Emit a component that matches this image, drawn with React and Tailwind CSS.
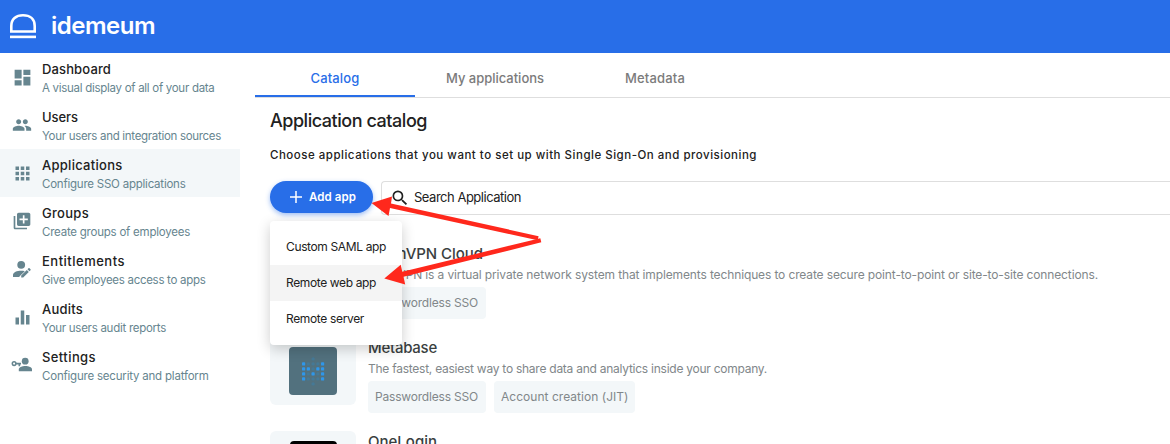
import React from "react";
import { MdDashboard, MdPeople, MdApps, MdLibraryAdd, MdEqualizer, MdSearch } from "react-icons/md";

function UserEditIcon() {
  return (
    <svg width="20" height="18" viewBox="0 0 20 18" fill="currentColor">
      <circle cx="9.2" cy="4.8" r="3.9" />
      <path d="M1 17v-2c0-2.7 4-4.2 8.2-4.2 1.5 0 2.5.1 3.6.4L7.4 16.6V17z" />
      <path d="M9.2 17.6v-2l5.6-5.600 2 2-5.600 5.600zM15.500 9.300l1-1c.3-.3.7-.3 1 0l1 1c.3.3.3.7 0 1l-1 1z" />
    </svg>
  );
}

function UserKeyIcon() {
  return (
    <svg width="22" height="18" viewBox="0 0 22 18" fill="currentColor">
      <circle cx="14.2" cy="5.2" r="3.4" />
      <path d="M7.8 15.2v-1.700c0-2.200 3.400-3.400 6.600-3.400s6.600 1.200 6.600 3.400v1.700z" />
      <circle cx="3.1" cy="7.6" r="1.8" fill="none" stroke="currentColor" strokeWidth="1.5" />
      <path d="M4.800 6.800h5.200v1.600h-.8v1.900H7.500V8.400H4.800z" />
    </svg>
  );
}

const nav = [
  { title: "Dashboard", sub: "A visual display of all of your data", icon: <MdDashboard size={21} />, tt: "tracking-[0.0103em]", st: "tracking-[-0.0248em]" },
  { title: "Users", sub: "Your users and integration sources", icon: <MdPeople size={20} />, tt: "tracking-[-0.0045em]", st: "tracking-[-0.0266em]" },
  { title: "Applications", sub: "Configure SSO applications", icon: <MdApps size={21} />, tt: "tracking-[0.021em]", st: "tracking-[-0.0197em]", active: true },
  { title: "Groups", sub: "Create groups of employees", icon: <MdLibraryAdd size={20} />, tt: "tracking-[0.023em]", st: "tracking-[-0.0201em]" },
  { title: "Entitlements", sub: "Give employees access to apps", icon: <UserEditIcon />, tt: "tracking-[0.0383em]", st: "tracking-[-0.025em]" },
  { title: "Audits", sub: "Your users audit reports", icon: <MdEqualizer size={21} />, tt: "tracking-[0.0172em]", st: "tracking-[-0.0235em]" },
  { title: "Settings", sub: "Configure security and platform", icon: <UserKeyIcon />, tt: "tracking-[0.032em]", st: "tracking-[-0.0179em]" },
];

const tabs = [
  { label: "Catalog", t: "tracking-[0.0113em]", active: true },
  { label: "My applications", t: "tracking-[-0.0015em]" },
  { label: "Metadata", t: "tracking-[0.0129em]" },
];

const menu = [
  { label: "Custom SAML app", t: "tracking-[-0.0305em]" },
  { label: "Remote web app", t: "tracking-[-0.0309em]", active: true },
  { label: "Remote server", t: "tracking-[-0.0288em]" },
];

const sso = { label: "Passwordless SSO", t: "w-[118px] tracking-[-0.0159em]" };
const jit = { label: "Account creation (JIT)", t: "w-[141px] tracking-[0.0028em]" };

// Dots of the Metabase logo: 1 is bright, 0 is dim, a space is empty.
const dots = ["  0  ", "10001", "11011", "10101", "10001", "  0  "];

function MetabaseLogo() {
  return (
    <svg width="48" height="48" viewBox="0 0 48 48">
      <rect width="48" height="48" rx="4" fill="#52717e" />
      {dots.map((row, y) =>
        [...row].map((d, x) =>
          d === " " ? null : d === "1" ? (
            <rect key={x + "-" + y} x={13 + x * 4.75} y={10.2 + y * 5} width="3.2" height="3.400" rx="0.9" fill="#2f97ea" />
          ) : (
            <circle key={x + "-" + y} cx={14.6 + x * 4.75} cy={11.9 + y * 5} r="1.700" fill="#457996" />
          )
        )
      )}
    </svg>
  );
}

const apps = [
  {
    name: "OpenVPN Cloud",
    nt: "tracking-[-0.003em]",
    desc: "OpenVPN is a virtual private network system that implements techniques to create secure point-to-point or site-to-site connections.",
    dt: "tracking-[-0.0107em]",
    chips: [sso],
  },
  {
    name: "Metabase",
    nt: "tracking-[-0.0169em]",
    desc: "The fastest, easiest way to share data and analytics inside your company.",
    dt: "tracking-[-0.0211em]",
    chips: [sso, jit],
    logo: <MetabaseLogo />,
  },
  {
    name: "OneLogin",
    nt: "tracking-[0.0002em]",
    desc: "",
    dt: "",
    chips: [],
    logo: <div className="h-12 w-[47px] rounded-sm bg-black" />,
  },
];

function Arrows() {
  return (
    <svg className="pointer-events-none absolute top-[190px] left-[360px] z-20" width="190" height="100" viewBox="360 190 190 100" fill="#ff281c">
      <path d="M371.5 203 392 196.500 391 203.500 538.600 236.200 537.700 240.300 390 208 388.500 216z" />
      <path d="M384.300 278.600 400.700 264.800 402.300 271.800 540.300 238.200 541.300 242.300 403.500 276.800 405.200 284.400z" />
    </svg>
  );
}

export default function App() {
  return (
    <div className="relative flex h-[444px] w-[1170px] flex-col overflow-hidden bg-white font-['Inter',sans-serif] text-[#212121]">
      <header className="flex h-[53px] shrink-0 items-center bg-[#286ee8] pl-[9px] text-white">
        <svg className="mb-0.5" width="28" height="26" viewBox="0 0 28 26" fill="none" stroke="currentColor" strokeWidth="2.6">
          <path d="M2.300 18.500V13C2.300 6 7 2.300 14 2.300S25.700 6 25.700 13v5.500z" />
          <path d="M1 23.900h26" />
        </svg>
        <span className="ml-[14px] pb-0.5 text-2xl leading-none font-semibold tracking-[-0.0212em]">idemeum</span>
      </header>

      <div className="flex min-h-0 flex-1">
        <nav className="w-60 shrink-0">
          {nav.map((n) => (
            <div key={n.title} className={"flex h-12 " + (n.active ? "bg-[#f3f7f9]" : "")}>
              <div className="flex w-[42px] shrink-0 items-center justify-center pr-0.5 pl-1 text-[#66858f]">{n.icon}</div>
              <div className="pt-[7px] whitespace-nowrap">
                <div className={"text-[13px] leading-[18px] font-medium " + n.tt}>{n.title}</div>
                <div className={"pt-px text-[11.5px] leading-[18px] text-[#66858f] " + n.st}>{n.sub}</div>
              </div>
            </div>
          ))}
        </nav>

        <main className="flex min-w-0 flex-1 flex-col pl-[15px]">
          <div className="flex h-[45px] shrink-0 border-b border-[#dedede]">
            {tabs.map((t) => (
              <div
                key={t.label}
                className={
                  "flex w-40 items-center justify-center border-b-2 pt-2.5 text-[13px] font-medium " +
                  t.t +
                  (t.active ? " border-[#286ee8] text-[#286ee8]" : " border-transparent text-[#7b7b7b]")
                }
              >
                {t.label}
              </div>
            ))}
          </div>

          <div className="pl-[15px] whitespace-nowrap">
            <h1 className="mt-2.5 text-lg leading-[26px] font-medium tracking-[-0.0258em]">Application catalog</h1>
            <p className="mt-3 text-[11.5px] leading-[18px] font-medium tracking-[0.044em]">
              Choose applications that you want to set up with Single Sign-On and provisioning
            </p>

            <div className="mt-[17px] flex gap-2">
              <div className="relative">
                <button className="flex h-8 w-[103px] items-center rounded-full bg-[#286ee8] pl-[19px] text-[11.5px] font-semibold tracking-[0.0075em] text-white shadow-[0_2px_5px_rgba(40,110,232,0.45)]">
                  <svg width="14" height="14" viewBox="0 0 14 14" stroke="currentColor" strokeWidth="1.500">
                    <path d="M7 1v12M1 7h12" />
                  </svg>
                  <span className="ml-1.5 pt-px">Add app</span>
                </button>
                <div className="absolute top-10 left-0 z-10 w-[132px] rounded bg-white py-2 shadow-[0_4px_14px_rgba(0,0,0,0.2)]">
                  {menu.map((m) => (
                    <div key={m.label} className={"flex h-9 items-center pl-4 text-xs " + m.t + (m.active ? " bg-[#f4f4f4]" : "")}>
                      {m.label}
                    </div>
                  ))}
                </div>
              </div>
              <div className="flex h-[34px] flex-1 items-center rounded-l border border-r-0 border-[#dedede] pl-2">
                <MdSearch size={20} />
                <span className="ml-1 text-[13px] tracking-[-0.0372em]">Search Application</span>
              </div>
            </div>

            <div className="mt-7 flex flex-col">
              {apps.map((a) => (
                <div key={a.name} className="flex h-[94px] shrink-0 gap-3">
                  <div className="flex h-[68px] w-[86px] shrink-0 items-center justify-center rounded-md bg-[#f3f7f9]">{a.logo}</div>
                  <div>
                    <div className={"text-[15px] leading-[22px] font-medium text-[#3a3f41] " + a.nt}>{a.name}</div>
                    <div className={"h-[22px] text-xs leading-5 text-[#81878a] " + a.dt}>{a.desc}</div>
                    <div className="flex gap-2">
                      {a.chips.map((c) => (
                        <span key={c.label} className={"flex h-8 items-center rounded bg-[#f3f7f9] pl-[7px] text-xs text-[#81878a] " + c.t}>
                          {c.label}
                        </span>
                      ))}
                    </div>
                  </div>
                </div>
              ))}
            </div>
          </div>
        </main>
      </div>
      <Arrows />
    </div>
  );
}
